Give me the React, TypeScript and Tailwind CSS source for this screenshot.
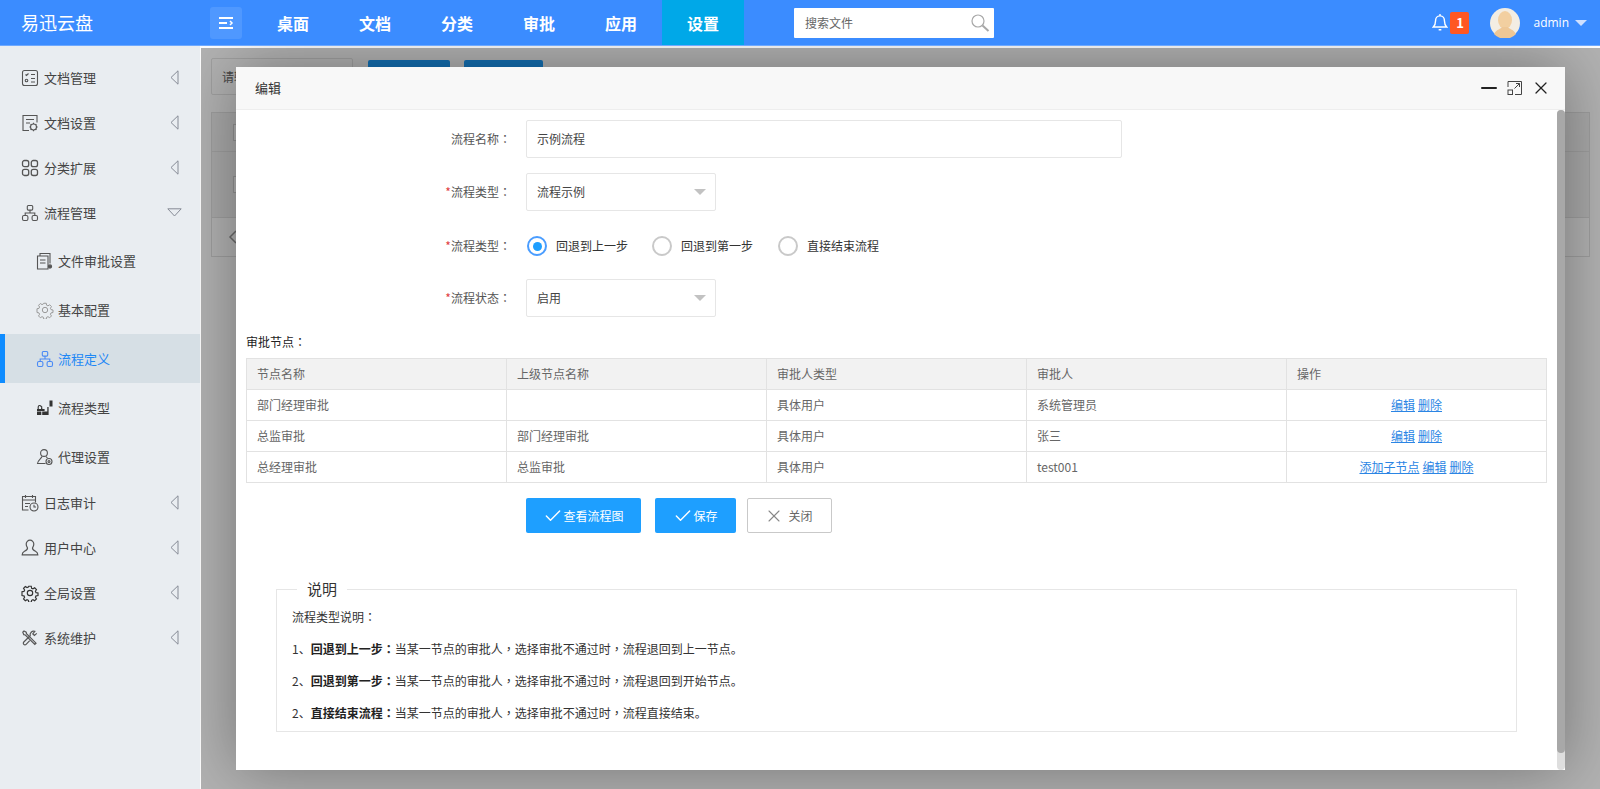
import React from "react";
import { Check, X, Minus } from "lucide-react";

const S = (p: React.SVGProps<SVGSVGElement> & { s?: number }) => {
  const { s = 18, children, ...r } = p;
  return (
    <svg width={s} height={s} viewBox="0 0 18 18" fill="none" stroke="currentColor" strokeWidth="1.1" {...r}>
      {children}
    </svg>
  );
};

const sitemap = (
  <>
    <rect x="6.3" y="1.5" width="5.4" height="4.6" rx="1" />
    <rect x="1.5" y="11.5" width="5.4" height="5" rx="1.4" />
    <rect x="11.1" y="11.5" width="5.4" height="5" rx="1.4" />
    <path d="M9 6v3M4.2 11.5V9h9.6v2.5" />
  </>
);
const gear = (
  <path d="M7.6 1.5h2.8l.4 2.2 1.5.7 1.9-1.2 2 2-1.2 1.9.7 1.5 2.2.4v2.8l-2.2.4-.7 1.5 1.2 1.9-2 2-1.9-1.2-1.5.7-.4 2.2H7.6l-.4-2.2-1.5-.7-1.9 1.2-2-2 1.2-1.9-.7-1.5-2.2-.4V7.6l2.2-.4.7-1.5-1.2-1.9 2-2 1.9 1.2 1.5-.7zM9 6a3 3 0 1 0 0 6 3 3 0 0 0 0-6z" transform="translate(.9 .9) scale(.9)" />
);

const icons: Record<string, React.ReactNode> = {
  doc: (
    <S>
      <rect x="1.5" y="1.5" width="15" height="15" rx="2" />
      <path d="M4.5 5.5l1 1 2-2M10 5.5h4M10 9.5h4M10 13h4" />
      <circle cx="5.5" cy="11.5" r="1.3" />
    </S>
  ),
  docset: (
    <S>
      <path d="M8 16.5H2V1.5h14v7" />
      <path d="M5 5.5h8M5 9h4" />
      <circle cx="12.5" cy="13" r="3" />
      <path d="M12.5 8.8v1.2M12.5 16v1.2M8.4 13h1.2M15.5 13h1.2M9.6 10.1l.8.8M14.6 15.1l.8.8M15.4 10.1l-.8.8M10.4 15.1l-.8.8" />
    </S>
  ),
  grid: (
    <S strokeWidth="1.3">
      <rect x="1.5" y="1.5" width="6.2" height="6.2" rx="2" />
      <rect x="10.3" y="1.5" width="6.2" height="6.2" rx="2" />
      <rect x="1.5" y="10.3" width="6.2" height="6.2" rx="2" />
      <rect x="10.3" y="10.3" width="6.2" height="6.2" rx="2" />
    </S>
  ),
  sitemap: <S>{sitemap}</S>,
  filecheck: (
    <S>
      <path d="M4 4V1.5h10v10" />
      <path d="M1.5 4h10.5v13H1.5z" />
      <path d="M4 8h5.5M4 11h5.5" />
      <circle cx="14" cy="14.5" r="1.6" fill="currentColor" />
    </S>
  ),
  gear: <S className="text-[#999]">{gear}</S>,
  factory: (
    <S stroke="none" fill="#333">
      <path d="M1 10h4l.3-3h.8l.3 3h2.2v2H1zM1 12.5h4.3V16H1zM6.2 12.5h5.3V16H6.2zM11.3 8h1.3v8h-1.3z" />
      <rect x="13.5" y="1.5" width="3" height="6" />
      <path d="M2.2 10V8a1.5 1.5 0 0 1 3 0" fill="none" stroke="#333" />
    </S>
  ),
  agent: (
    <S>
      <circle cx="8" cy="5" r="3.4" />
      <path d="M6 8.5C5 11 2 12 1.5 15.5h8" />
      <path d="M10 8.5c.5.7 1 1.2 1.5 1.5" />
      <circle cx="13" cy="13.5" r="3" />
      <circle cx="13" cy="13.5" r="1" />
    </S>
  ),
  log: (
    <S>
      <path d="M7.5 16H1.5V2.5h13v6" />
      <path d="M4.5 1v3M11.5 1v3M1.5 6h13M4 9.5h5M4 12.5h3" />
      <circle cx="13" cy="13" r="4" />
      <path d="M13 10.8V13h2" />
    </S>
  ),
  user: (
    <S strokeWidth="1.2">
      <path d="M9 1.2a3.8 3.8 0 0 0-3.8 3.8c0 2 1 3.2 1.3 4 .2 1.6-1.3 2.4-3 3.2-1.300.7-2.300 1.700-2.300 3.600h15.600c0-1.900-1-2.900-2.300-3.600-1.700-.8-3.200-1.600-3-3.200.3-.8 1.300-2 1.300-4A3.800 3.800 0 0 0 9 1.200z" />
    </S>
  ),
  cog: <S strokeWidth="1.3" className="text-[#333]">{gear}</S>,
  tools: (
    <S strokeWidth="1.2">
      <path d="M3 2l2.200 1.200.3 1.500 9.500 9.500-1.200 1.200L4.300 6 2.800 5.700 1.800 3.200z" />
      <path d="M15.800 4.400l-2.400 2-1.600-1.500 2-2.500a3.600 3.600 0 0 0-4.600 4.400L2.800 13a1.600 1.600 0 0 0 2.300 2.300l3.600-3.700" />
    </S>
  ),
};

const LeftArrow = () => (
  <svg width="9" height="15" viewBox="0 0 9 15" className="mb-[2px] mr-[21px]">
    <path d="M8 .8L1 7.500 8 14.200z" fill="none" stroke="#868b96" strokeWidth="1" />
  </svg>
);
const DownArrow = () => (
  <svg width="15" height="9" viewBox="0 0 15 9" className="mb-[2px] mr-[18px]">
    <path d="M.8 .8h13.400L7.500 8z" fill="none" stroke="#868b96" strokeWidth="1" />
  </svg>
);

const Item = ({ icon, label, open }: { icon: string; label: string; open?: boolean }) => (
  <div className="flex h-[45px] items-center pl-[21px] text-[13px] text-[#444]">
    <span className="mb-[2px] w-[23px] shrink-0 text-[#555]">{icons[icon]}</span>
    <span className="mb-[2px] flex-1">{label}</span>
    {open ? <DownArrow /> : <LeftArrow />}
  </div>
);
const Sub = ({ icon, label, active }: { icon: string; label: string; active?: boolean }) => (
  <div
    className={
      active
        ? "flex h-[49px] items-center border-l-[5px] border-[#0f8cff] bg-[#d6dfe5] pl-[31px] text-[13px] text-[#1e88f5]"
        : "flex h-[49px] items-center pl-[36px] text-[13px] text-[#444]"
    }
  >
    <span className={active ? "w-[22px] shrink-0 text-[#4a8af5]" : "w-[22px] shrink-0 text-[#555]"}>{icons[icon]}</span>
    <span>{label}</span>
  </div>
);

const Cn = ({ children }: { children: React.ReactNode }) => (
  <span className="font-['Noto_Sans_CJK_TC',sans-serif]">{children}</span>
);

const Field = ({ req, label, children }: { req?: boolean; label: string; children: React.ReactNode }) => (
  <div className="flex items-center">
    <label className="w-[275px] text-right text-[12px] text-[#555]">
      {req && <span className="text-[#e04040]">*</span>}
      {label}
      <Cn>：</Cn>
    </label>
    <div className="ml-[15px]">{children}</div>
  </div>
);

const Select = ({ value }: { value: string }) => (
  <div className="flex h-[38px] w-[190px] items-center justify-between rounded-[2px] border border-[#e6e6e6] bg-white pl-[10px] pr-[9px] text-[12px] text-[#444]">
    <span>{value}</span>
    <span className="h-0 w-0 border-x-[6px] border-t-[6px] border-x-transparent border-t-[#c2c2c2]" />
  </div>
);

const Radio = ({ label, on, w }: { label: string; on?: boolean; w: string }) => (
  <div className={`flex items-center ${w}`}>
    <span
      className={
        on
          ? "flex h-[20px] w-[20px] items-center justify-center rounded-full border-2 border-[#4a9dff]"
          : "flex h-[20px] w-[20px] items-center justify-center rounded-full border-2 border-[#c9c9c9]"
      }
    >
      {on && <span className="h-[9px] w-[9px] rounded-full bg-[#1e9fff]" />}
    </span>
    <span className="ml-[9px] text-[12px] text-[#333]">{label}</span>
  </div>
);

const rows = [
  ["部门经理审批", "", "具体用户", "系统管理员", ["编辑", "删除"]],
  ["总监审批", "部门经理审批", "具体用户", "张三", ["编辑", "删除"]],
  ["总经理审批", "总监审批", "具体用户", "test001", ["添加子节点", "编辑", "删除"]],
] as const;

const Note = ({ n, title, text }: { n: string; title: string; text: string }) => (
  <p className="flex h-[32px] items-center text-[12px] text-[#333]">
    <span>{n}、</span>
    <b className="font-bold text-[#222]">{title}</b>
    <Cn><b>：</b></Cn>
    <span>当某一节点的审批人<Cn>，</Cn>选择审批不通过时<Cn>，</Cn>{text}</span>
  </p>
);

export default function App() {
  return (
    <div className="flex h-[789px] w-[1600px] flex-col overflow-hidden bg-white font-['Noto_Sans_CJK_SC','Liberation_Sans',sans-serif]">
      <header className="flex h-[46px] shrink-0 items-center border-b border-[#6ea9ff] bg-[#3b8cff] text-white">
        <div className="w-[210px] pl-[21px] text-[18px]">易迅云盘</div>
        <div className="flex h-[32px] w-[32px] items-center justify-center rounded-[3px] bg-[#4f98ff]">
          <svg width="16" height="14" viewBox="0 0 16 14" fill="none" stroke="#fff" strokeWidth="2">
            <path d="M1 2h14M1 7h8M1 12h14" />
            <path d="M12 5l2 2-2 2" strokeWidth="1.500" />
          </svg>
        </div>
        <nav className="ml-[10px] flex text-[16px] font-bold">
          {["桌面", "文档", "分类", "审批", "应用"].map((t) => (
            <div key={t} className="flex h-[45px] w-[82px] items-center justify-center">{t}</div>
          ))}
          <div className="flex h-[45px] w-[82px] items-center justify-center bg-[#00a8e8]">设置</div>
        </nav>
        <div className="ml-[50px] flex h-[30px] w-[200px] items-center justify-between rounded-[1px] bg-white pl-[11px] pr-[4px] text-[12px] text-[#666]">
          <span>搜索文件</span>
          <svg width="20" height="20" viewBox="0 0 20 20" fill="none" stroke="#a8a8a8" strokeWidth="1.200">
            <circle cx="8" cy="8" r="6" />
            <path d="M12.500 12.500l6 5.500" strokeWidth="2" />
          </svg>
        </div>
        <div className="ml-auto flex items-center">
          <svg width="16" height="20" viewBox="0 0 18 22" fill="none" stroke="#fff" strokeWidth="1.600">
            <path d="M9 3c-3.500 0-5 2.500-5 5.500 0 3-.5 5-2.500 7h15c-2-2-2.500-4-2.500-7C14 5.500 12.500 3 9 3z" />
            <path d="M7.500 18.500h3M9 1v2" />
          </svg>
          <span className="ml-[2px] flex h-[22px] w-[19px] items-center justify-center rounded-[2px] bg-[#ff5722] text-[13px] font-bold">1</span>
          <svg width="30" height="30" viewBox="0 0 30 30" className="ml-[21px]">
            <circle cx="15" cy="15" r="15" fill="#f3ede3" />
            <ellipse cx="15" cy="12" rx="7" ry="9" fill="#f2cfa0" />
            <path d="M4 26c3-5 7-5 8-7h6c1 2 5 2 8 7a15 15 0 0 1-22 0z" fill="#eec796" />
          </svg>
          <span className="ml-[13px] font-['Open_Sans',sans-serif] text-[12px]">admin</span>
          <span className="ml-[6px] mr-[13px] h-0 w-0 border-x-[6px] border-t-[6px] border-x-transparent border-t-[#cfe0ff]" />
        </div>
      </header>

      <div className="flex min-h-0 flex-1">
        <aside className="w-[200px] shrink-0 bg-[#e9edf1] pt-[10px]">
          <Item icon="doc" label="文档管理" />
          <Item icon="docset" label="文档设置" />
          <Item icon="grid" label="分类扩展" />
          <Item icon="sitemap" label="流程管理" open />
          <Sub icon="filecheck" label="文件审批设置" />
          <Sub icon="gear" label="基本配置" />
          <Sub icon="sitemap" label="流程定义" active />
          <Sub icon="factory" label="流程类型" />
          <Sub icon="agent" label="代理设置" />
          <Item icon="log" label="日志审计" />
          <Item icon="user" label="用户中心" />
          <Item icon="cog" label="全局设置" />
          <Item icon="tools" label="系统维护" />
        </aside>

        <main className="relative min-w-0 flex-1 overflow-hidden bg-white pl-[11px] pt-[12px]">
          <div className="flex items-start">
            <div className="flex h-[37px] w-[142px] items-center rounded-[2px] border border-[#e6e6e6] pl-[10px] text-[12px] text-[#666]">请输</div>
            <div className="ml-[15px] mt-[2px] h-[38px] w-[82px] rounded-[2px] bg-[#1e9fff]" />
            <div className="ml-[14px] mt-[2px] h-[38px] w-[79px] rounded-[2px] bg-[#1e9fff]" />
          </div>
          <div className="mt-[14px] w-[1379px] border border-[#e2e2e2]">
            <div className="flex h-[39px] items-center border-b border-[#e2e2e2] bg-[#f2f2f2] pl-[21px]">
              <div className="h-[17px] w-[17px] border border-[#d2d2d2] bg-white" />
            </div>
            <div className="flex h-[66px] items-center justify-between border-b border-[#e2e2e2] bg-[#f2f2f2] pl-[21px] pr-[24px]">
              <div className="h-[17px] w-[17px] border border-[#d2d2d2] bg-white" />
              <div className="h-[22px] w-px bg-[#ff5722]" />
            </div>
            <div className="flex h-[38px] items-center pl-[16px]">
              <svg width="10" height="16" viewBox="0 0 10 16" fill="none" stroke="#999" strokeWidth="1.500">
                <path d="M8 2L2 8l6 6" />
              </svg>
            </div>
          </div>

          <div className="absolute inset-x-0 bottom-0 top-[2px] ml-px bg-black/30">
            <div className="absolute left-[35px] top-[19px] h-[703px] w-[1329px] bg-white shadow-[0_0_60px_rgba(0,0,0,.35)]">
              <div className="flex h-[43px] items-center justify-between border-b border-[#eeeeee] bg-[#f8f8f8] pl-[19px] pr-[14px] text-[13px] text-[#333]">
                <span>编辑</span>
                <div className="flex items-center text-[#222]">
                  <Minus size={24} strokeWidth={2} className="mr-[6px]" />
                  <svg width="16" height="16" viewBox="0 0 16 16" fill="none" stroke="#444" strokeWidth="1" className="mr-[8px]">
                    <path d="M1 7V1.500h13.500v13H8" />
                    <rect x="1" y="10" width="4.500" height="4.500" />
                    <path d="M7.500 8.500l5-5M9 3.500h3.500V7" />
                  </svg>
                  <X size={20} strokeWidth={1.500} />
                </div>
              </div>

              <div className="pt-[10px]">
                <Field label="流程名称">
                  <div className="flex h-[38px] w-[596px] items-center rounded-[2px] border border-[#e6e6e6] pl-[10px] text-[12px] text-[#444]">示例流程</div>
                </Field>
                <div className="mt-[15px]">
                  <Field req label="流程类型"><Select value="流程示例" /></Field>
                </div>
                <div className="mt-[16px] h-[38px]">
                  <Field req label="流程类型">
                    <div className="flex h-[38px] items-center pl-px">
                      <Radio on label="回退到上一步" w="w-[125px]" />
                      <Radio label="回退到第一步" w="w-[126px]" />
                      <Radio label="直接结束流程" w="w-[110px]" />
                    </div>
                  </Field>
                </div>
                <div className="mt-[14px]">
                  <Field req label="流程状态"><Select value="启用" /></Field>
                </div>

                <div className="ml-[10px] mt-[16px] h-[18px] text-[12px] leading-[18px] text-[#222]">审批节点<Cn>：</Cn></div>
                <table className="ml-[10px] mt-[7px] w-[1301px] table-fixed border-collapse text-[12px] text-[#666]">
                  <thead>
                    <tr className="h-[31px] bg-[#f2f2f2]">
                      {["节点名称", "上级节点名称", "审批人类型", "审批人", "操作"].map((h) => (
                        <th key={h} className="border border-[#e2e2e2] px-[10px] text-left font-normal">{h}</th>
                      ))}
                    </tr>
                  </thead>
                  <tbody>
                    {rows.map((r) => (
                      <tr key={r[0]} className="h-[31px]">
                        <td className="border border-[#e2e2e2] px-[10px]">{r[0]}</td>
                        <td className="border border-[#e2e2e2] px-[10px]">{r[1]}</td>
                        <td className="border border-[#e2e2e2] px-[10px]">{r[2]}</td>
                        <td className="border border-[#e2e2e2] px-[10px]">{r[3]}</td>
                        <td className="border border-[#e2e2e2] px-[10px] text-center">
                          {r[4].map((l, i) => (
                            <a key={l} className={i ? "ml-[3px] text-[#2b85e4] underline" : "text-[#2b85e4] underline"}>{l}</a>
                          ))}
                        </td>
                      </tr>
                    ))}
                  </tbody>
                </table>

                <div className="ml-[290px] mt-[15px] flex text-[12px]">
                  <div className="flex h-[35px] w-[115px] items-center justify-center rounded-[2px] bg-[#1e9fff] text-white">
                    <Check size={20} strokeWidth={1.700} />查看流程图
                  </div>
                  <div className="ml-[14px] flex h-[35px] w-[81px] items-center justify-center rounded-[2px] bg-[#1e9fff] text-white">
                    <Check size={20} strokeWidth={1.700} />保存
                  </div>
                  <div className="ml-[11px] flex h-[35px] w-[85px] items-center justify-center rounded-[2px] border border-[#c9c9c9] bg-white text-[#666]">
                    <X size={20} strokeWidth={1.300} className="-ml-[2px] mr-[4px] text-[#888]" />关闭
                  </div>
                </div>

                <fieldset className="ml-[40px] mt-[46px] w-[1241px] border border-[#e6e6e6] pb-[2px] pl-[15px] pt-[2px]">
                  <legend className="ml-[5px] px-[10px] text-[15px] leading-[20px] text-[#333]">说明</legend>
                  <p className="flex h-[32px] items-center text-[12px] text-[#333]">流程类型说明<Cn>：</Cn></p>
                  <Note n="1" title="回退到上一步" text="流程退回到上一节点。" />
                  <Note n="2" title="回退到第一步" text="流程退回到开始节点。" />
                  <Note n="2" title="直接结束流程" text="流程直接结束。" />
                </fieldset>
              </div>

              <div className="absolute bottom-0 right-0 top-[43px] w-[8px] rounded-[4px] bg-[#dedede]">
                <div className="h-[643px] w-full rounded-[4px] bg-[#a8a8a8]" />
              </div>
            </div>
          </div>
        </main>
      </div>
    </div>
  );
}
